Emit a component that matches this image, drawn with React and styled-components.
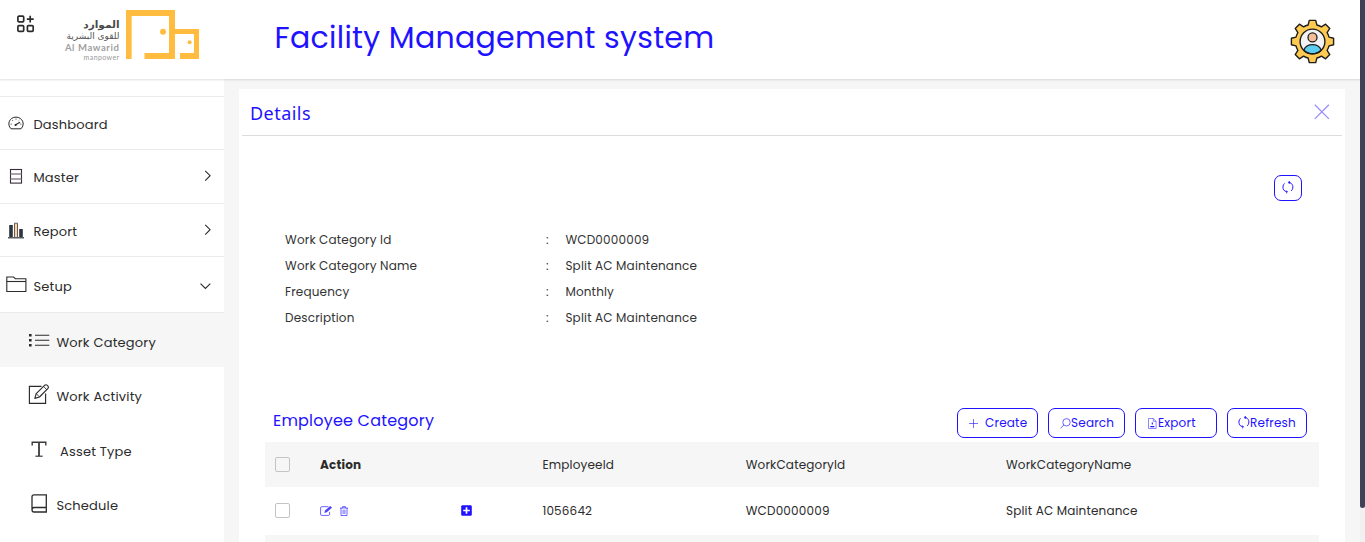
import React from "react";
import styled, { createGlobalStyle, css } from "styled-components";

const BLUE = "#1f12ff";

const GlobalStyle = createGlobalStyle`
  * { box-sizing: border-box; }
  body {
    margin: 0;
    background: #f6f6f6;
    color: #2b2b2b;
    font-family: Poppins, Inter, "Liberation Sans", sans-serif;
    letter-spacing: 0.2px;
  }
  svg { display: block; flex: none; }
`;

const Page = styled.div`
  display: flex;
  height: 542px;
  overflow: hidden;
`;

const Shell = styled.div`
  flex: 1;
  min-width: 0;
  display: flex;
  flex-direction: column;
`;

const ScrollTrack = styled.div`
  width: 5px;
  background: #f1f1f1;
`;

const ScrollThumb = styled.div`
  height: 508px;
  background: #3d4259;
  border-radius: 0 0 3px 3px;
`;

const Label = styled.span`
  white-space: nowrap;
  font-weight: ${(p) => (p.$bold ? 700 : 400)};
`;

const Header = styled.header`
  flex: none;
  display: flex;
  align-items: flex-start;
  height: 79px;
  background: #fff;
  box-shadow: 0 1px 2px rgba(0, 0, 0, 0.13);
  z-index: 1;
`;

const MenuButton = styled.div`
  margin: 15px 0 0 17px;
`;

const Brand = styled.div`
  display: flex;
  margin: 10px 0 0 24px;
  width: 140px;
  justify-content: flex-end;
  gap: 6.5px;
`;

const BrandText = styled.div`
  display: flex;
  flex-direction: column;
  align-items: flex-end;
  padding-top: 7px;
  white-space: nowrap;
`;

const BrandLine = styled.span`
  font-family: ${(p) => (p.$arabic ? '"DejaVu Sans", sans-serif' : "Lato, sans-serif")};
  font-size: ${(p) => p.$size}px;
  line-height: ${(p) => p.$line}px;
  font-weight: ${(p) => (p.$bold ? 700 : 400)};
  color: ${(p) => p.$color};
  letter-spacing: ${(p) => p.$track || 0}px;
`;

const Title = styled.h1`
  margin: 15px 0 0 75.6px;
  font-size: 30px;
  line-height: 45px;
  font-weight: 400;
  letter-spacing: 0.29px;
  color: ${BLUE};
  white-space: nowrap;
`;

const Avatar = styled.div`
  margin: 19px 25px 0 auto;
`;

const Body = styled.div`
  flex: 1;
  min-height: 0;
  display: flex;
`;

const Sidebar = styled.nav`
  width: 224px;
  flex: none;
  background: #fff;
  padding-top: 17px;
`;

const NavItem = styled.div`
  display: flex;
  align-items: center;
  height: ${(p) => p.$height}px;
  border-top: 1px solid #ebebeb;
  padding: ${(p) => p.$top || 4}px 12px 0 0;
  font-size: 13px;
`;

const NavIcon = styled.div`
  width: 33.4px;
  padding-left: ${(p) => p.$left}px;
  padding-bottom: 4px;
`;

const Chevron = styled.div`
  margin-left: auto;
  padding-bottom: 4px;
`;

const SubItem = styled.div`
  display: flex;
  align-items: center;
  height: ${(p) => p.$height}px;
  padding-top: 6px;
  font-size: 13px;
  ${(p) => p.$first && css`border-top: 1px solid #ebebeb;`}
  ${(p) => p.$active && css`background: #f6f6f6;`}
`;

const SubIcon = styled.div`
  width: ${(p) => p.$width || 56.4}px;
  padding-left: 28px;
  padding-bottom: 6px;
`;

const Panel = styled.main`
  flex: 1;
  margin: 10px 15px 0 15px;
  background: #fff;
  display: flex;
  flex-direction: column;
`;

const PanelHeader = styled.div`
  display: flex;
  align-items: center;
  justify-content: space-between;
  height: 47px;
  flex: none;
  margin: 0 3px;
  padding: 0 12px 0 8px;
  border-bottom: 1px solid #dcdcdc;
`;

const PanelTitle = styled.h2`
  margin: 1px 0 0;
  font: 400 18px/26px "Noto Sans", sans-serif;
  letter-spacing: 0.45px;
  color: ${BLUE};
`;

const Toolbar = styled.div`
  display: flex;
  justify-content: flex-end;
  padding: 39px 43px 0 0;
`;

const Button = styled.button`
  display: flex;
  align-items: center;
  justify-content: flex-start;
  gap: ${(p) => p.$gap || 0}px;
  width: ${(p) => p.$width}px;
  height: ${(p) => p.$height || 30}px;
  padding: 0 0 ${(p) => p.$bottom || 0}px ${(p) => p.$left}px;
  border: 1px solid ${BLUE};
  border-radius: 7px;
  background: #fff;
  color: ${BLUE};
  font: 400 12px/18px Poppins, Inter, sans-serif;
  letter-spacing: 0.2px;
`;

const Info = styled.dl`
  display: grid;
  grid-template-columns: 261px 19.4px auto;
  grid-auto-rows: 26px;
  align-items: center;
  margin: 26px 0 0 46px;
  font-size: 12px;
  letter-spacing: 0.17px;
  color: #333;
`;

const Term = styled.dt`
  margin: 0;
`;

const Value = styled.dd`
  margin: 0;
`;

const Section = styled.div`
  display: flex;
  align-items: center;
  margin: 77px 38px 4px 34px;
`;

const SectionTitle = styled.h3`
  margin: 0 auto 4px 0;
  font-size: 16px;
  line-height: 24px;
  font-weight: 400;
  color: ${BLUE};
`;

const Buttons = styled.div`
  display: flex;
  gap: 10px;
`;

const Table = styled.div`
  margin: 0 26px;
  font-size: 12px;
  letter-spacing: 0.17px;
`;

const Row = styled.div`
  display: grid;
  grid-template-columns: 45px 141px 81.4px 203.3px 260.3px auto;
  align-items: center;
  height: ${(p) => p.$height}px;
  padding-left: 10px;
  background: ${(p) => (p.$shaded ? "#f6f6f6" : "#fff")};
`;

const CheckBox = styled.span`
  width: 15px;
  height: 15px;
  margin-bottom: 1px;
  border: 1px solid #c4c4c4;
  border-radius: 2px;
  background: ${(p) => (p.$shaded ? "#f6f6f6" : "#fff")};
`;

const Actions = styled.span`
  display: flex;
  align-items: center;
  gap: 7px;
  padding-bottom: 1px;
`;

const AddCell = styled.span`
  padding-bottom: 1px;
`;

const GridPlusIcon = () => (
  <svg width="18" height="18" viewBox="0 0 18 18" fill="none" stroke="#2b2b2b" strokeWidth="1.7">
    <rect x="0.9" y="1.2" width="5.8" height="5.6" rx="1" />
    <rect x="0.9" y="10.7" width="5.8" height="5.6" rx="1" />
    <rect x="10.4" y="10.7" width="5.8" height="5.6" rx="1" />
    <path d="M13.2 0.7V7.6M9.8 4.1H16.7" />
  </svg>
);

const DoorsLogo = () => (
  <svg width="73" height="49" viewBox="0 0 73 49">
    <path
      d="M0 0H49V19H73V49H54V43H68V24H49V49H18.5V43H43V6H5.6V49H0Z"
      fill="#ffbc3f"
    />
    <circle cx="37" cy="21.7" r="3" fill="#ffbc3f" />
    <circle cx="63.6" cy="32.2" r="2" fill="#ffbc3f" />
  </svg>
);

const GearUserIcon = () => (
  <svg width="45" height="45" viewBox="0 0 45 45">
    <path
      d="M19.3 1.4H25.7L26.9 6Q29.4 6.6 31.4 7.9L35.6 5.2L39.8 9.4L37.1 13.6Q38.4 15.6 39 18.1L43.6 19.3V25.7L39 26.9Q38.4 29.4 37.1 31.4L39.8 35.6L35.6 39.8L31.4 37.1Q29.4 38.4 26.9 39L25.7 43.6H19.3L18.1 39Q15.6 38.4 13.6 37.1L9.4 39.8L5.2 35.6L7.9 31.4Q6.6 29.4 6 26.9L1.4 25.7V19.3L6 18.1Q6.6 15.6 7.9 13.6L5.2 9.4L9.4 5.2L13.6 7.9Q15.6 6.6 18.1 6Z"
      fill="#ffca52"
      stroke="#1e1e1e"
      strokeWidth="1.4"
      strokeLinejoin="round"
    />
    <circle cx="22.5" cy="22.5" r="12.4" fill="#f3f3f6" />
    <path d="M13.8 31.2C15.4 27.2 18.4 25.7 22.5 25.7C26.6 25.7 29.6 27.2 31.2 31.2C26.5 35.9 18.5 35.9 13.8 31.2Z" fill="#5dcdf0" stroke="#1e1e1e" strokeWidth="1.3" />
    <circle cx="22.5" cy="18.4" r="4.5" fill="#f2bd98" stroke="#1e1e1e" strokeWidth="1.3" />
    <circle cx="22.5" cy="22.5" r="12.4" fill="none" stroke="#1e1e1e" strokeWidth="1.4" />
  </svg>
);

const GaugeIcon = () => (
  <svg width="16" height="16" viewBox="0 0 16 16" fill="none" stroke="#2b2b2b" strokeWidth="1">
    <path d="M3 13.8C-1.6 9.2 1.6 2.1 8 2.1S17.6 9.2 13 13.8Z" strokeLinejoin="round" />
    <path d="M8 3.5V4.7M4.3 5.2L5.1 6M2.6 9.1H3.8M12.2 9.1H13.4M10.7 5.7L11.3 5.1" strokeWidth="0.8" />
    <path d="M7.2 10.1L12 7.3" strokeWidth="1.1" />
    <circle cx="7.6" cy="10" r="1.1" fill="#2b2b2b" stroke="none" />
  </svg>
);

const ServerIcon = () => (
  <svg width="14" height="16" viewBox="0 0 14 16" fill="none" stroke="#3a2b3c">
    <rect x="1.5" y="1.5" width="11" height="13.6" strokeWidth="1.1" />
    <path d="M1.5 6H12.5M1.5 11H12.5" stroke="#888" strokeWidth="1.6" />
  </svg>
);

const BarsIcon = () => (
  <svg width="16" height="17" viewBox="0 0 16 17">
    <path d="M1.2 3H4.8V15H1.2ZM11.2 7H14.8V15H11.2Z" fill="#2b3540" />
    <path d="M6.5 15V1.2H9.5V15" fill="#f5d3ac" stroke="#6b5a50" />
    <path d="M0 15.8H16" stroke="#2b3540" strokeWidth="1.2" />
  </svg>
);

const FolderIcon = () => (
  <svg width="21" height="18" viewBox="0 0 21 18" fill="none" stroke="#2b2b2b" strokeWidth="1.1">
    <path d="M0.8 15.5V1H7.6L9.4 2.7H19.9V15.5Z" />
    <path d="M0.8 5.5H19.9" />
  </svg>
);

const ChevronIcon = ({ down }) => (
  <svg width="12" height="12" viewBox="0 0 12 12" fill="none" stroke="#2b2b2b" strokeWidth="1.1">
    <path d={down ? "M0.5 4.6L5.4 9.5L10.3 4.6" : "M5.2 0.8L10.1 5.7L5.2 10.6"} />
  </svg>
);

const ListIcon = () => (
  <svg width="22" height="14" viewBox="0 0 22 14" stroke="#2b2b2b" fill="#2b2b2b">
    <path d="M7 2.3H21.3M7 7.3H21.3M7 12.3H21.3" strokeWidth="1.1" />
    <path d="M1 1H3.6V3.4H1ZM1 6H3.6V8.4H1ZM1 11H3.6V13.4H1Z" stroke="none" />
  </svg>
);

const EditIcon = () => (
  <svg width="22" height="22" viewBox="0 0 22 22" fill="none" stroke="#2b2b2b" strokeWidth="1.15">
    <path d="M13.5 3.3H1.4V20.3H17.6V10.5" />
    <path d="M6.8 15.4L8.2 10.6L16.8 2.2C18.4 0.8 21.6 3.6 20 5.4L11.5 14Z" strokeLinejoin="round" />
    <path d="M15.5 3.4L18.8 6.7M8.4 10.8L11.3 13.8" strokeWidth="0.9" />
  </svg>
);

const TypeIcon = () => (
  <svg width="22" height="18" viewBox="0 0 22 18" fill="none" stroke="#3a3a3a">
    <path d="M4.2 5.4V2.2H17.8V5.4" strokeWidth="1.4" />
    <path d="M11 2.2V16" strokeWidth="1.8" />
    <path d="M7.4 16.2H14.6" strokeWidth="1.2" />
  </svg>
);

const BookIcon = () => (
  <svg width="22" height="20" viewBox="0 0 22 20" fill="none" stroke="#2b2b2b" strokeWidth="1.3">
    <path d="M18.3 14.5V1.8H6C4.7 1.8 4 2.5 4 3.8V16.7C4 18.3 4.7 19 6 19H18.3V14.5H6C4.7 14.5 4 15.3 4 16.7" />
  </svg>
);

const CloseIcon = () => (
  <svg width="17" height="17" viewBox="0 0 17 17" fill="none" stroke="#968fff" strokeWidth="1.3">
    <path d="M1.8 0.8L15.9 14.9M15.9 0.8L1.8 14.9" />
  </svg>
);

const ReloadIcon = () => (
  <svg width="12" height="13" viewBox="0 0 12 13" fill="none" stroke={BLUE} strokeWidth="1">
    <path d="M6.6 1.3C10.6 1.6 12.4 6.6 9.3 9.9M5.1 10.9C1.1 10.6 -0.5 5.4 2.5 2.4" />
    <path d="M7.9 0.1L6.3 1.4L7.7 3M4 12.3L5.5 10.9L4 9.4" strokeWidth="0.9" />
  </svg>
);

const PlusIcon = () => (
  <svg width="9" height="9" viewBox="0 0 9 9" stroke={BLUE} strokeWidth="0.6">
    <path d="M4.5 0V9M0 4.5H9" />
  </svg>
);

const SearchIcon = () => (
  <svg width="11" height="11" viewBox="0 0 11 11" fill="none" stroke={BLUE} strokeWidth="0.65">
    <circle cx="6.5" cy="4.3" r="3.7" />
    <path d="M3.8 7L0.5 10.4" />
  </svg>
);

const ExportIcon = () => (
  <svg width="11" height="11" viewBox="0 0 11 11" fill="none" stroke={BLUE} strokeWidth="0.5">
    <path d="M1.5 0.5H6.3L9.1 3.3V10.5H1.5ZM6.3 0.5V3.3H9.1" />
    <path d="M5.3 4.6V6.6M3.3 8.6H7.3" strokeWidth="1.1" />
  </svg>
);

const SmallEditIcon = () => (
  <svg width="13" height="12" viewBox="0 0 13 12" fill="none" stroke={BLUE} strokeWidth="0.65">
    <path d="M8.4 1.7H1.8Q0.6 1.7 0.6 2.9V9.2Q0.6 10.4 1.8 10.4H8.4Q9.6 10.4 9.6 9.2V6.8" />
    <path d="M4.3 8L5 5.6L10.2 0.9L12 2.6L6.8 7.3Z" fill={BLUE} fillOpacity="0.8" stroke="none" />
  </svg>
);

const TrashIcon = () => (
  <svg width="8" height="10" viewBox="0 0 8 10" fill="none" stroke={BLUE} strokeWidth="0.65">
    <path d="M0 2H8M2.7 2V0.6H5.3V2M1 2V9.5H7V2M3.1 3.7V8M4.9 3.7V8" />
  </svg>
);

const AddSquareIcon = () => (
  <svg width="11" height="11" viewBox="0 0 11 11">
    <rect x="0.2" y="0.2" width="10.6" height="10.6" rx="1.4" fill={BLUE} />
    <path d="M5.5 2.2V8.8M2.2 5.5H8.8" stroke="#fff" strokeWidth="1.7" />
  </svg>
);

const details = [
  ["Work Category Id", "WCD0000009"],
  ["Work Category Name", "Split AC Maintenance"],
  ["Frequency", "Monthly"],
  ["Description", "Split AC Maintenance"],
];

const mainNav = [
  { label: "Dashboard", height: 53, icon: <GaugeIcon />, left: 8 },
  { label: "Master", height: 54, top: 2, icon: <ServerIcon />, left: 9, chevron: true },
  { label: "Report", height: 53, icon: <BarsIcon />, left: 8, chevron: true },
  { label: "Setup", height: 56, icon: <FolderIcon />, left: 6, chevron: true, down: true },
];

const subNav = [
  { label: "Work Category", height: 55, icon: <ListIcon />, active: true },
  { label: "Work Activity", height: 54, icon: <EditIcon /> },
  { label: "Asset Type", height: 55, icon: <TypeIcon />, width: 60 },
  { label: "Schedule", height: 54, icon: <BookIcon /> },
];

export default function App() {
  return (
    <Page>
      <GlobalStyle />
      <Shell>
        <Header>
          <MenuButton><GridPlusIcon /></MenuButton>
          <Brand>
            <BrandText>
              <BrandLine $arabic $bold $size={10.5} $line={14} $color="#4a4a4a">الموارد</BrandLine>
              <BrandLine $arabic $size={9} $line={11} $color="#555">للقوى البشرية</BrandLine>
              <BrandLine $bold $size={9.5} $line={11} $color="#a0a0a0" $track={0.6}>Al Mawarid</BrandLine>
              <BrandLine $size={7} $line={9} $color="#999" $track={0.4}>manpower</BrandLine>
            </BrandText>
            <DoorsLogo />
          </Brand>
          <Title>Facility Management system</Title>
          <Avatar><GearUserIcon /></Avatar>
        </Header>
        <Body>
          <Sidebar>
            {mainNav.map((n) => (
              <NavItem key={n.label} $height={n.height} $top={n.top}>
                <NavIcon $left={n.left}>{n.icon}</NavIcon>
                <Label>{n.label}</Label>
                {n.chevron && <Chevron><ChevronIcon down={n.down} /></Chevron>}
              </NavItem>
            ))}
            {subNav.map((n, i) => (
              <SubItem key={n.label} $height={n.height} $active={n.active} $first={i === 0}>
                <SubIcon $width={n.width}>{n.icon}</SubIcon>
                <Label>{n.label}</Label>
              </SubItem>
            ))}
          </Sidebar>
          <Panel>
            <PanelHeader>
              <PanelTitle>Details</PanelTitle>
              <CloseIcon />
            </PanelHeader>
            <Toolbar>
              <Button $width={28} $height={26} $left={7} $bottom={1} aria-label="Reload"><ReloadIcon /></Button>
            </Toolbar>
            <Info>
              {details.map(([term, value]) => (
                <React.Fragment key={term}>
                  <Term><Label>{term}</Label></Term>
                  <span>:</span>
                  <Value><Label>{value}</Label></Value>
                </React.Fragment>
              ))}
            </Info>
            <Section>
              <SectionTitle>Employee Category</SectionTitle>
              <Buttons>
                <Button $width={81} $left={11} $gap={7}><PlusIcon /><Label>Create</Label></Button>
                <Button $width={77} $left={11}><SearchIcon /><Label>Search</Label></Button>
                <Button $width={82} $left={11}><ExportIcon /><Label>Export</Label></Button>
                <Button $width={80} $left={10} $bottom={1}><ReloadIcon /><Label>Refresh</Label></Button>
              </Buttons>
            </Section>
            <Table>
              <Row $height={45} $shaded>
                <CheckBox $shaded />
                <Label $bold>Action</Label>
                <span />
                <Label>EmployeeId</Label>
                <Label>WorkCategoryId</Label>
                <Label>WorkCategoryName</Label>
              </Row>
              <Row $height={48}>
                <CheckBox />
                <Actions><SmallEditIcon /><TrashIcon /></Actions>
                <AddCell><AddSquareIcon /></AddCell>
                <Label>1056642</Label>
                <Label>WCD0000009</Label>
                <Label>Split AC Maintenance</Label>
              </Row>
              <Row $height={48} $shaded />
            </Table>
          </Panel>
        </Body>
      </Shell>
      <ScrollTrack><ScrollThumb /></ScrollTrack>
    </Page>
  );
}
